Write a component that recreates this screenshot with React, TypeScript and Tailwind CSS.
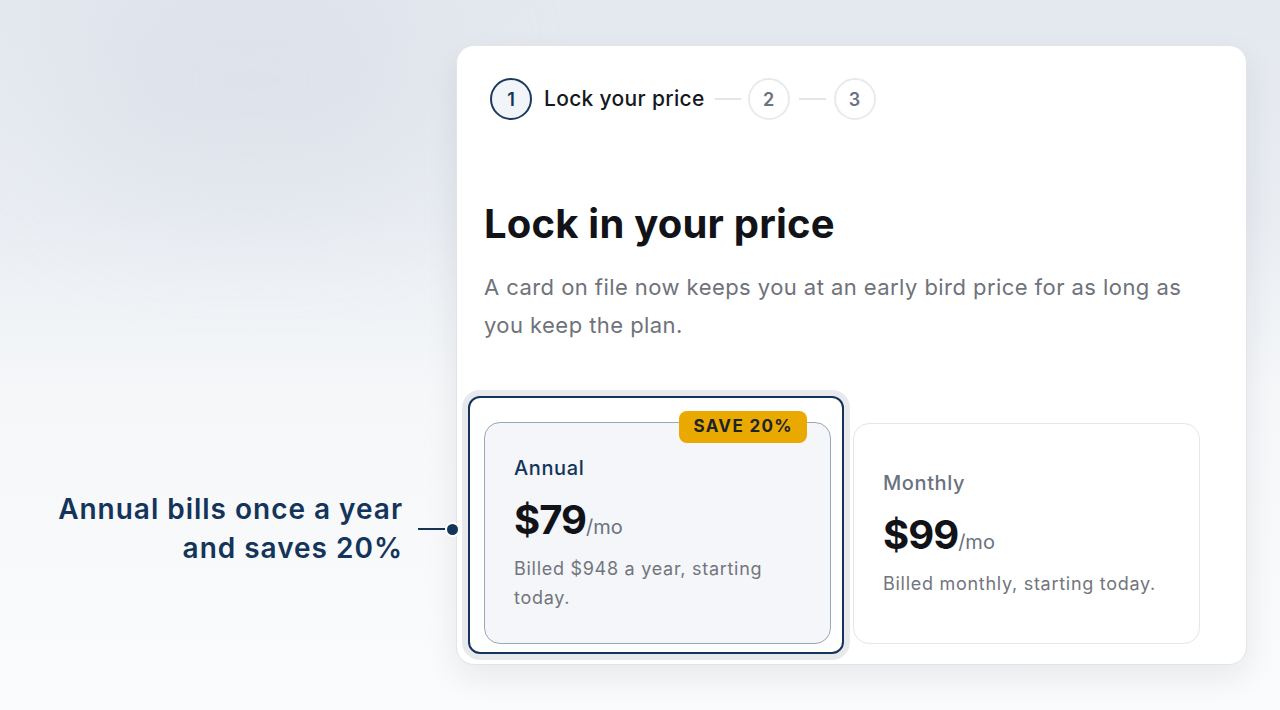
const navy = 'text-[#14345a]';

function StepCircle({ n, active }: { n: number; active?: boolean }) {
  return (
    <div
      className={
        active
          ? 'w-[42px] h-[42px] rounded-full border-2 border-[#1b3a5e] bg-[#f1f4f8] flex items-center justify-center text-[18px] font-semibold text-[#14345a]'
          : 'w-[42px] h-[42px] rounded-full border-2 border-[#e8eaee] bg-white flex items-center justify-center text-[18px] font-semibold text-[#6b7280]'
      }
    >
      {n}
    </div>
  );
}

function PlanBody({
  label,
  price,
  note,
  selected,
}: {
  label: string;
  price: string;
  note: string;
  selected?: boolean;
}) {
  return (
    <div className="flex flex-col justify-center h-full pl-[29px] pr-[24px]">
      <div
        className={`text-[20px] leading-[28px] font-medium tracking-[0.03em] ${
          selected ? 'text-[#14345a]' : 'text-[#6b7280]'
        }`}
      >
        {label}
      </div>
      <div className="mt-[14px] h-[48px] leading-[48px] whitespace-nowrap">
        <span className="text-[40px] font-bold tracking-tight text-[#111318]">{price}</span>
        <span className="text-[20px] text-[#6b7280]">/mo</span>
      </div>
      <p className="mt-[10px] text-[18px] leading-[29px] tracking-[0.04em] text-[#72757d]">{note}</p>
    </div>
  );
}

export default function App() {
  return (
    <div
      className="relative w-[1280px] h-[710px] overflow-hidden flex bg-[linear-gradient(180deg,#e4e8ef_0%,#e9edf2_30%,#f5f7f9_55%,#fafbfc_100%)]"
      style={{ fontFamily: 'Inter, "Noto Sans", "Liberation Sans", sans-serif' }}
    >
      {/* soft blob top-left */}
      <div className="absolute left-[60px] top-[-40px] w-[380px] h-[240px] rounded-full bg-[#d9dee8] opacity-60 blur-[60px]" />

      {/* callout */}
      <div className="relative z-20 w-[456px] shrink-0 pt-[490px] flex justify-end">
        <div className="flex items-center h-[78px] -mr-[4px]">
          <p className={`text-right text-[28px] leading-[39px] font-semibold tracking-[0.035em] ${navy}`}>
            Annual bills once a year
            <br />
            and saves 20%
          </p>
          <div className="ml-[15px] w-[27px] h-[2px] bg-[#14345a]" />
          <div className="w-[15px] h-[15px] rounded-full bg-[#14345a] border-2 border-white" />
        </div>
      </div>

      {/* panel */}
      <div className="relative z-10 mt-[45px] w-[791px] h-[620px] shrink-0 rounded-[18px] border border-[#e1e4e9] bg-white shadow-[0_12px_32px_rgba(15,23,42,0.08)] pl-[27px] pt-[32px]">
        {/* stepper */}
        <div className="flex items-center pl-[6px]">
          <StepCircle n={1} active />
          <span className="ml-[12px] text-[21px] font-medium tracking-[0.015em] text-[#16181d]">
            Lock your price
          </span>
          <div className="ml-[10px] w-[26px] h-[1.5px] bg-[#e3e5e9]" />
          <div className="ml-[7px]">
            <StepCircle n={2} />
          </div>
          <div className="ml-[9px] w-[27px] h-[1.5px] bg-[#e3e5e9]" />
          <div className="ml-[8px]">
            <StepCircle n={3} />
          </div>
        </div>

        <h1 className="mt-[80px] text-[40px] leading-[48px] font-bold tracking-[0.005em] text-[#111318]">
          Lock in your price
        </h1>
        <p className="mt-[20px] w-[716px] text-[22px] leading-[38px] tracking-[0.02em] text-[#6f727a]">
          A card on file now keeps you at an early bird price for as long as you keep the plan.
        </p>

        <div className="mt-[78px] w-[716px] grid grid-cols-2 gap-[22px]">
          <div className="relative h-[222px]">
            <div className="absolute left-[-16px] top-[-26px] right-[-13px] bottom-[-10px] rounded-[12px] border-2 border-[#14345a] bg-white ring-[6px] ring-[#e7e9ed]" />
            <div className="relative h-full rounded-[16px] border-[1.5px] border-[#9aa7b8] bg-[#f4f6f9]">
              <span className="absolute right-[23px] top-[-12px] h-[32px] px-[14px] rounded-[8px] bg-[#eaa900] flex items-center text-[17px] font-bold tracking-[0.08em] text-[#1d232b]">
                SAVE 20%
              </span>
              <PlanBody
                label="Annual"
                price="$79"
                note="Billed $948 a year, starting today."
                selected
              />
            </div>
          </div>
          <div className="h-[221px] mt-[1px] rounded-[16px] border border-[#e4e6ea] bg-white">
            <PlanBody label="Monthly" price="$99" note="Billed monthly, starting today." />
          </div>
        </div>
      </div>
    </div>
  );
}
